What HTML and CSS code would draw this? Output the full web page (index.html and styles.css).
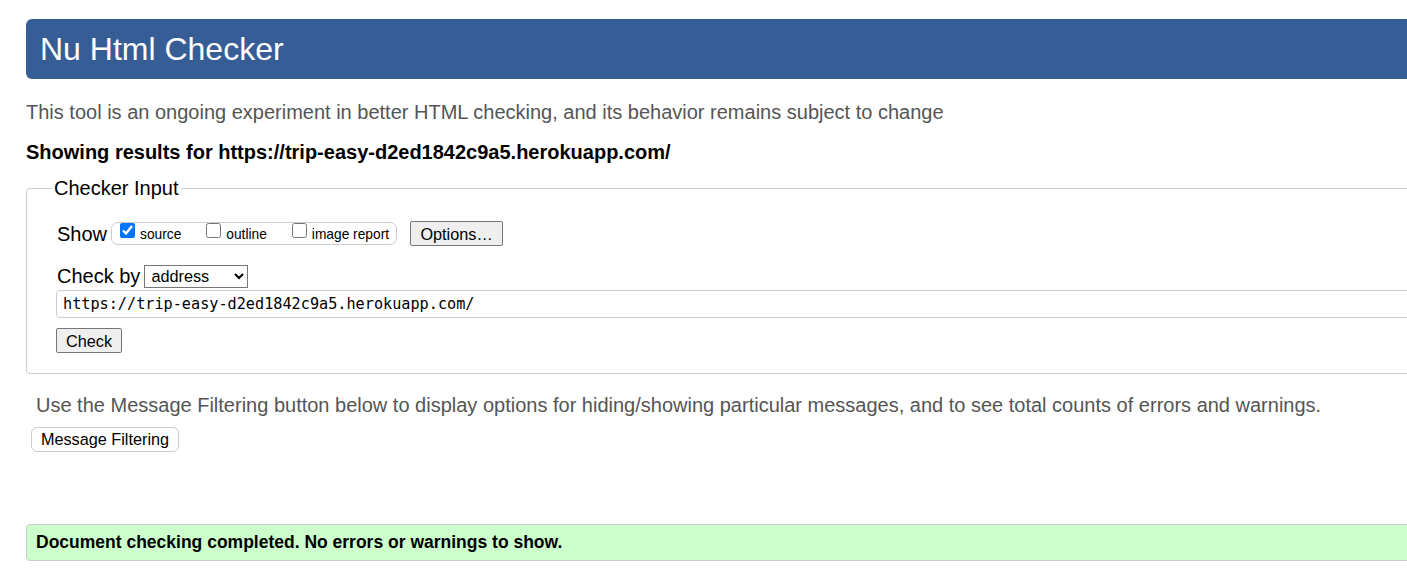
FILE: index.html
```html
<!DOCTYPE html>
<html lang="en">
<head>
<meta charset="utf-8">
<title>Nu Html Checker</title>
<link rel="stylesheet" href="styles.css">
</head>
<body>
<div class="page">
  <h1 class="banner">Nu Html Checker</h1>
  <p class="intro">This tool is an ongoing experiment in better HTML checking, and its behavior remains subject to change</p>
  <p class="results">Showing results for https://trip-easy-d2ed1842c9a5.herokuapp.com/</p>
  <fieldset class="checker">
    <legend class="checker-legend">Checker Input</legend>
    <div class="row show-row">
      <span class="row-label">Show</span>
      <span class="show-group">
        <label class="opt"><input type="checkbox" checked><span>source</span></label>
        <label class="opt"><input type="checkbox"><span>outline</span></label>
        <label class="opt"><input type="checkbox"><span>image report</span></label>
      </span>
      <button class="btn btn-options" type="button">Options…</button>
    </div>
    <div class="row by-row">
      <span class="row-label">Check by</span>
      <select class="by-select">
        <option>address</option>
      </select>
    </div>
    <input class="url-input" type="text" value="https://trip-easy-d2ed1842c9a5.herokuapp.com/">
    <div class="check-row"><button class="btn btn-check" type="button">Check</button></div>
  </fieldset>
  <p class="filter-note">Use the Message Filtering button below to display options for hiding/showing particular messages, and to see total counts of errors and warnings.</p>
  <button class="btn-filter" type="button">Message Filtering</button>
  <div class="success">Document checking completed. No errors or warnings to show.</div>
</div>
</body>
</html>
```
FILE: styles.css
```css
html, body {
  margin: 0;
  padding: 0;
  overflow: hidden;
  background: #fff;
}
body {
  font-family: "Liberation Sans", Arial, sans-serif;
  color: #000;
}
.page {
  width: 1500px;
  padding: 19px 0 0 26px;
}
.banner {
  margin: 0;
  height: 60px;
  line-height: 60px;
  padding-left: 14px;
  background: #365d95;
  color: #fff;
  font-size: 32px;
  font-weight: normal;
  border-radius: 6px 0 0 6px;
}
.intro {
  margin: 21px 0 0;
  font-size: 20px;
  line-height: 24px;
  color: #555;
}
.results {
  margin: 16px 0 0;
  font-size: 20px;
  line-height: 24px;
  font-weight: bold;
}
.checker {
  margin: 12px 0 0;
  border: 1px solid #ccc;
  border-radius: 4px;
  padding: 21px 0 20px 30px;
  min-width: 0;
}
.checker-legend {
  font-size: 20px;
  line-height: 24px;
  padding: 0 2px;
  margin-left: -5px;
}
.row {
  display: flex;
  align-items: center;
}
.row-label {
  font-size: 20px;
  line-height: 24px;
}
.show-row {
  height: 25px;
}
.show-group {
  display: flex;
  align-items: flex-start;
  margin-left: 4px;
  height: 23px;
  box-sizing: border-box;
  border: 1px solid #ccc;
  border-radius: 7px;
  padding: 0 7px 0 8px;
  gap: 25px;
}
.opt {
  display: flex;
  align-items: flex-start;
  font-size: 13.75px;
}
.opt input {
  width: 15px;
  height: 15px;
  margin: 0;
}
.opt span {
  padding-top: 4px;
  margin-left: 5px;
  line-height: 16px;
}
.btn {
  font-family: "Liberation Sans", Arial, sans-serif;
  font-size: 16.25px;
  background: #efefef;
  border: 1px solid #767676;
  border-radius: 2px;
  color: #000;
  box-sizing: border-box;
  height: 25px;
  padding: 0 9px;
  line-height: 20px;
}
.btn-options {
  margin-left: 13px;
  width: 93px;
}
.by-row {
  margin-top: 18px;
  height: 24px;
}
.by-select {
  margin-left: 4px;
  width: 104px;
  height: 23px;
  font-family: "Liberation Sans", Arial, sans-serif;
  font-size: 16.25px;
  border: 1px solid #767676;
  border-radius: 0;
  background: #fff;
  color: #000;
  padding: 0 2px;
}
.url-input {
  display: block;
  margin: 2px 0 0 -1px;
  width: 1500px;
  height: 28px;
  box-sizing: border-box;
  border: 1px solid #ccc;
  border-radius: 4px;
  padding: 0 6px;
  font-family: "DejaVu Sans Mono", "Liberation Mono", monospace;
  font-size: 15.2px;
  color: #000;
}
.check-row {
  margin-top: 10px;
  margin-left: -1px;
}
.btn-check {
  width: 66px;
}
.filter-note {
  margin: 19px 0 0 10px;
  font-size: 20px;
  line-height: 24px;
  color: #555;
}
.btn-filter {
  display: block;
  margin: 10px 0 0 5px;
  height: 25px;
  width: 148px;
  box-sizing: border-box;
  background: #fff;
  border: 1px solid #ccc;
  border-radius: 6px;
  font-family: "Liberation Sans", Arial, sans-serif;
  font-size: 16.25px;
  color: #000;
  padding: 0 8px;
}
.success {
  margin-top: 72px;
  height: 37px;
  box-sizing: border-box;
  line-height: 35px;
  border: 1px solid #ccc;
  border-radius: 4px 0 0 4px;
  background: #ccffcc;
  padding-left: 9px;
  font-size: 17.5px;
  font-weight: bold;
}
```
